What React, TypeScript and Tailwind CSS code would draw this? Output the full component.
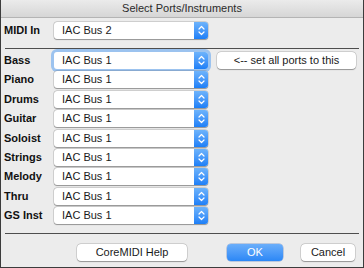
import React from 'react';

const parts = ['Bass', 'Piano', 'Drums', 'Guitar', 'Soloist', 'Strings', 'Melody', 'Thru', 'GS Inst'];

// blue up/down stepper glyph of a mac popup button
const Stepper: React.FC = () => (
  <span className="flex h-full w-[14px] items-center justify-center rounded-r-[3px] bg-gradient-to-b from-[#6db3fb] to-[#1c7ff7]">
    <svg width="7" height="11" viewBox="0 0 7 11" fill="none">
      <path d="M1 4 L3.5 1.5 L6 4" stroke="white" strokeWidth="1.2" strokeLinecap="round" strokeLinejoin="round" />
      <path d="M1 7 L3.5 9.5 L6 7" stroke="white" strokeWidth="1.2" strokeLinecap="round" strokeLinejoin="round" />
    </svg>
  </span>
);

const PopUp: React.FC<{ value: string; focused?: boolean }> = ({ value, focused }) => (
  <div
    className={`flex h-[17px] w-[154px] items-stretch rounded-[3px] bg-white shadow-[0_0_0_0.5px_rgba(0,0,0,0.2),0_0.5px_1px_rgba(0,0,0,0.3)] ${
      focused ? 'ring-[3px] ring-[#9cc3ef]' : ''
    }`}
  >
    <span className="flex-1 pl-[8px] text-[11px] leading-[17px] text-[#1a1a1a]">{value}</span>
    <Stepper />
  </div>
);

const PushButton: React.FC<{ label: string; className: string; primary?: boolean }> = ({ label, className, primary }) => (
  <button
    className={`${className} block h-[17px] rounded-[4px] text-[11px] leading-[17px] ${
      primary
        ? 'bg-gradient-to-b from-[#6aaefa] to-[#2a87f6] text-white shadow-[0_0_0_0.5px_rgba(0,60,160,0.4)]'
        : 'bg-white text-[#1a1a1a] shadow-[0_0_0_0.5px_rgba(0,0,0,0.2),0_0.5px_1px_rgba(0,0,0,0.3)]'
    }`}
  >
    {label}
  </button>
);

export default function App() {
  return (
    <div
      className="flex h-[268px] w-[364px] flex-col border-x border-b border-[#3c3c3c] bg-[#ececec] leading-[17px]"
      style={{ fontFamily: '"Liberation Sans", Arial, sans-serif' }}
    >
      {/* title bar */}
      <div className="h-[18px] shrink-0 border-b border-[#b4b4b4] bg-gradient-to-b from-[#ebebeb] to-[#d6d6d6] text-center text-[11px] leading-[17px] text-[#2b2b2b]">
        Select Ports/Instruments
      </div>

      <div className="flex flex-1 flex-col px-[3px]">
        <div className="mt-[4px] flex h-[17px] items-center">
          <span className="w-[50px] text-[11px] font-bold text-[#111]">MIDI In</span>
          <PopUp value="IAC Bus 2" />
        </div>

        <div className="mx-[1px] mt-[9px] h-px bg-[#4e4e4e]" />

        <div className="mt-[3px] flex flex-col gap-[2.4px]">
          {parts.map((p, i) => (
            <div key={p} className="flex h-[17px] items-center">
              <span className="w-[50px] text-[11px] font-bold text-[#111]">{p}</span>
              <PopUp value="IAC Bus 1" focused={i === 0} />
              {i === 0 && <PushButton label="<-- set all ports to this" className="ml-[9px] w-[139px]" />}
            </div>
          ))}
        </div>

        <div className="mx-[1px] mt-[9px] h-px bg-[#4e4e4e]" />

        <div className="mt-[10px] flex h-[17px] items-center">
          <PushButton label="CoreMIDI Help" className="ml-[73px] w-[110px]" />
          <PushButton label="OK" className="ml-[40px] w-[56px]" primary />
          <PushButton label="Cancel" className="ml-[18px] w-[54px]" />
        </div>
      </div>
    </div>
  );
}
